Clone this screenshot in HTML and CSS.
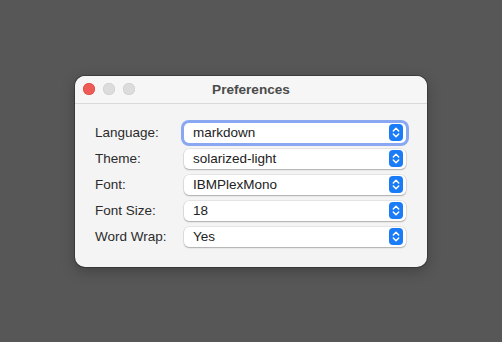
FILE: index.html
```html
<!DOCTYPE html>
<html lang="en">
<head>
  <meta charset="UTF-8">
  <title>Preferences</title>
  <link rel="stylesheet" href="styles.css">
</head>
<body>
  <div class="window">
    <div class="titlebar">
      <div class="lights">
        <span class="light close"></span>
        <span class="light"></span>
        <span class="light"></span>
      </div>
      <div class="title">Preferences</div>
    </div>

    <div class="form">
      <label>Language:</label>
      <div class="select focused"><span>markdown</span><i class="arrow"><svg viewBox="0 0 14 17"><path d="M4.3 7 L7 4.3 L9.7 7 M4.3 10 L7 12.7 L9.7 10"/></svg></i></div>

      <label>Theme:</label>
      <div class="select"><span>solarized-light</span><i class="arrow"><svg viewBox="0 0 14 17"><path d="M4.3 7 L7 4.3 L9.7 7 M4.3 10 L7 12.7 L9.7 10"/></svg></i></div>

      <label>Font:</label>
      <div class="select"><span>IBMPlexMono</span><i class="arrow"><svg viewBox="0 0 14 17"><path d="M4.3 7 L7 4.3 L9.7 7 M4.3 10 L7 12.7 L9.7 10"/></svg></i></div>

      <label>Font Size:</label>
      <div class="select"><span>18</span><i class="arrow"><svg viewBox="0 0 14 17"><path d="M4.3 7 L7 4.3 L9.7 7 M4.3 10 L7 12.7 L9.7 10"/></svg></i></div>

      <label>Word Wrap:</label>
      <div class="select"><span>Yes</span><i class="arrow"><svg viewBox="0 0 14 17"><path d="M4.3 7 L7 4.3 L9.7 7 M4.3 10 L7 12.7 L9.7 10"/></svg></i></div>
    </div>
  </div>
</body>
</html>
```

FILE: styles.css
```css
html, body {
  margin: 0;
  height: 100%;
}

body {
  background: #575757;
  font-family: 'Liberation Sans', Arial, sans-serif;
  display: flex;
  align-items: center;
  justify-content: center;
}

.window {
  width: 352px;
  height: 191px;
  background: #f4f4f4;
  border-radius: 10px;
  box-shadow: 0 0 0 1px rgba(0, 0, 0, 0.25), 0 4px 14px rgba(0, 0, 0, 0.25);
  overflow: hidden;
  display: flex;
  flex-direction: column;
}

.titlebar {
  height: 27px;
  border-bottom: 1px solid #d9d9d9;
  background: #f6f6f6;
  display: flex;
  align-items: center;
  position: relative;
}

.lights {
  display: flex;
  gap: 8px;
  padding-left: 8px;
}

.light {
  width: 12px;
  height: 12px;
  border-radius: 50%;
  background: #dcdcdc;
  box-shadow: inset 0 0 0 0.5px #c8c8c8;
}

.light.close {
  background: #ee5a55;
  box-shadow: inset 0 0 0 0.5px #d8443e;
}

.title {
  position: absolute;
  left: 0;
  right: 0;
  text-align: center;
  font-size: 13.6px;
  font-weight: bold;
  color: #4b4b4b;
}

.form {
  display: grid;
  grid-template-columns: 89px 222px;
  row-gap: 6px;
  padding: 19px 0 0 20px;
  align-items: center;
}

.form label {
  font-size: 13.5px;
  color: #2b2b2b;
}

.select {
  height: 20px;
  background: #fff;
  border-radius: 5px;
  box-shadow: 0 0 0 0.5px rgba(0, 0, 0, 0.12), 0 1px 1.5px rgba(0, 0, 0, 0.25);
  display: flex;
  align-items: center;
  justify-content: space-between;
  padding: 0 3px 0 9px;
  font-size: 13.5px;
  color: #222;
}

.select.focused {
  box-shadow: 0 0 0 3px #8aa8f2, 0 1px 1.5px rgba(0, 0, 0, 0.25);
}

.arrow {
  width: 14px;
  height: 17px;
  background: #1a7cf7;
  border-radius: 4px;
  display: flex;
}

.arrow svg {
  width: 14px;
  height: 17px;
}

.arrow path {
  fill: none;
  stroke: #fff;
  stroke-width: 1.5;
  stroke-linecap: round;
  stroke-linejoin: round;
}
```
